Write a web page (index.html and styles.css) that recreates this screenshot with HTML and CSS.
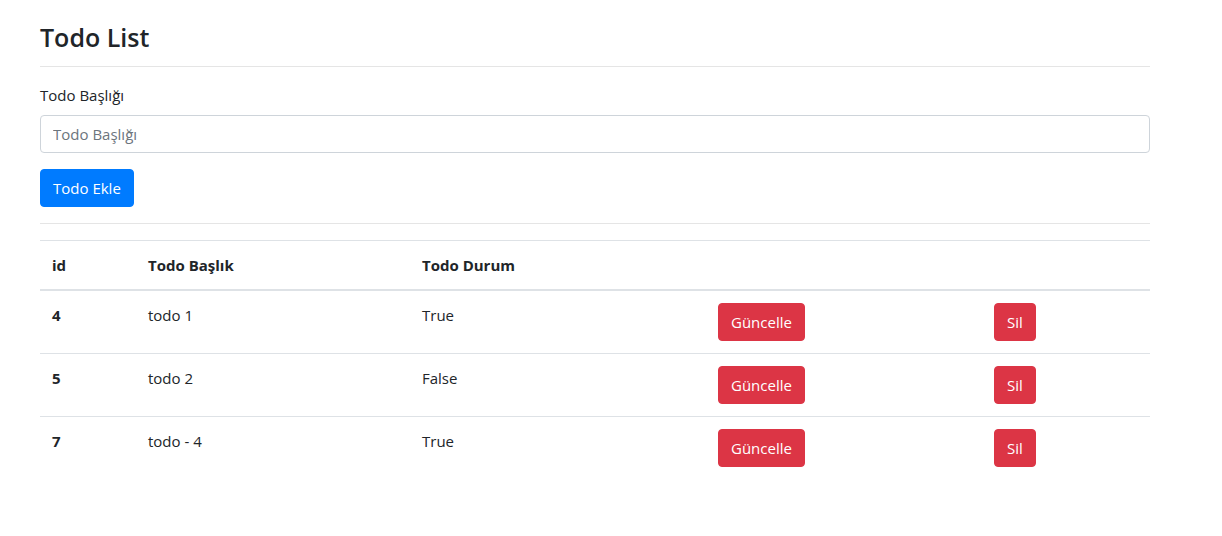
FILE: index.html
```html
<!DOCTYPE html>
<html lang="tr">
<head>
<meta charset="utf-8">
<title>Todo List</title>
<link rel="stylesheet" href="styles.css">
</head>
<body>
<div class="container">
  <h3 class="title">Todo List</h3>
  <hr class="rule">
  <div class="form-group">
    <label class="label" for="todo">Todo Başlığı</label>
    <input class="input" id="todo" type="text" placeholder="Todo Başlığı">
  </div>
  <button class="btn btn-primary">Todo Ekle</button>
  <hr class="rule">
  <table class="table">
    <colgroup>
      <col class="c1"><col class="c2"><col class="c3"><col class="c4"><col class="c5">
    </colgroup>
    <thead>
      <tr><th>id</th><th>Todo Başlık</th><th>Todo Durum</th><th></th><th></th></tr>
    </thead>
    <tbody>
      <tr><th>4</th><td>todo 1</td><td>True</td><td><button class="btn btn-danger">Güncelle</button></td><td><button class="btn btn-danger">Sil</button></td></tr>
      <tr><th>5</th><td>todo 2</td><td>False</td><td><button class="btn btn-danger">Güncelle</button></td><td><button class="btn btn-danger">Sil</button></td></tr>
      <tr><th>7</th><td>todo - 4</td><td>True</td><td><button class="btn btn-danger">Güncelle</button></td><td><button class="btn btn-danger">Sil</button></td></tr>
    </tbody>
  </table>
</div>
</body>
</html>
```
FILE: styles.css
```css
* { box-sizing: border-box; }
html, body { margin: 0; padding: 0; background: #fff; }
body {
  font-family: "Open Sans", "Noto Sans", sans-serif;
  font-size: 16px;
  line-height: 1.5;
  color: #212529;
}
.container {
  width: 1110px;
  margin-left: 40px;
  padding-top: 16px;
}
.title {
  margin: 0 0 8px;
  font-size: 25px;
  font-weight: 600;
  line-height: 30px;
  height: 34px;
  padding-top: 6px;
}
.rule {
  margin: 16px 0;
  border: 0;
  border-top: 1px solid rgba(0,0,0,.1);
  height: 0;
}
.form-group { margin-bottom: 16px; }
.label { display: inline-block; margin-bottom: 8px; font-size: 15px; line-height: 24px; }
.input {
  display: block;
  width: 100%;
  height: 38px;
  padding: 6px 12px;
  font-family: inherit;
  font-size: 15px;
  line-height: 1.5;
  color: #495057;
  border: 1px solid #ced4da;
  border-radius: 4px;
  background: #fff;
}
.input::placeholder { color: #6c757d; opacity: 1; }
.btn {
  display: inline-block;
  height: 38px;
  padding: 6px 12px;
  font-family: inherit;
  font-size: 15px;
  line-height: 24px;
  border: 1px solid transparent;
  border-radius: 4px;
  color: #fff;
  cursor: pointer;
}
.btn-primary { background: #007bff; border-color: #007bff; }
.btn-danger { background: #dc3545; border-color: #dc3545; }
.table {
  width: 100%;
  border-collapse: collapse;
  table-layout: fixed;
  margin-bottom: 16px;
}
.c1 { width: 96px; }
.c2 { width: 274px; }
.c3 { width: 296px; }
.c4 { width: 276px; }
.c5 { width: 168px; }
.table th, .table td {
  padding: 12px;
  vertical-align: top;
  border-top: 1px solid #dee2e6;
  text-align: left;
  font-size: 15px;
  line-height: 24px;
}
.table th { font-weight: 700; }
.table thead th { border-bottom: 2px solid #dee2e6; vertical-align: bottom; }
```
